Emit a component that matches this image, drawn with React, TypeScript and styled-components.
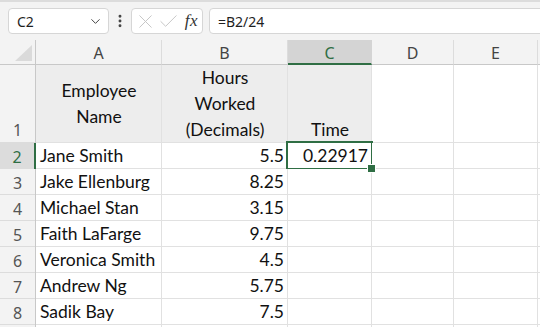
import React from "react";
import styled, { createGlobalStyle, css } from "styled-components";
import { ChevronDown, EllipsisVertical, X, Check } from "lucide-react";

const GREEN = "#2f6e44";
const GRID = "#e1e1e1";
const HEADER_LINE = "#c8c8c8";

const GlobalStyle = createGlobalStyle`
  html, body {
    margin: 0;
    padding: 0;
    width: 540px;
    height: 327px;
    overflow: hidden;
    background: #ffffff;
  }
  * {
    box-sizing: border-box;
  }
`;

const Window = styled.div`
  width: 540px;
  height: 327px;
  overflow: hidden;
  display: flex;
  flex-direction: column;
  background: #f3f3f3;
  border-top: 2px solid #dcdcdc;
`;

const FormulaBar = styled.div`
  display: flex;
  align-items: center;
  height: 38px;
  padding: 6px 0 6px 8px;
  font-family: "Noto Sans", "Open Sans", sans-serif;
  font-size: 14px;
  color: #1f1f1f;
`;

const NameBox = styled.div`
  flex: none;
  width: 101px;
  height: 26px;
  display: flex;
  align-items: center;
  justify-content: space-between;
  padding: 0 5px 0 8px;
  background: #ffffff;
  border: 1px solid #d6d6d6;
  border-radius: 4px;
`;

const Dots = styled.div`
  flex: none;
  width: 22px;
  display: flex;
  justify-content: center;
  color: #444;
`;

const IconGroup = styled.div`
  flex: none;
  width: 72px;
  height: 26px;
  display: flex;
  align-items: center;
  gap: 0;
  padding: 0 4px 0 2px;
  background: #ffffff;
  border: 1px solid #d6d6d6;
  border-radius: 4px;
  color: #c4c4c4;
`;

const Fx = styled.span`
  margin-left: auto;
  font-family: "Liberation Serif", serif;
  font-style: italic;
  font-size: 17px;
  color: #333;
  letter-spacing: 0.5px;
`;

const FormulaInput = styled.div`
  flex: 1;
  height: 26px;
  margin-left: 6px;
  margin-right: -10px;
  display: flex;
  align-items: center;
  padding-left: 8px;
  background: #ffffff;
  border: 1px solid #d6d6d6;
  border-radius: 4px;
`;

const Sheet = styled.div`
  display: grid;
  grid-template-columns: 36px 126px 126px 84px 82px 84px 1fr;
  grid-template-rows: 25px 78px repeat(8, 26px);
  background: #ffffff;
`;

const headerFont = css`
  font-family: "Noto Sans", "Open Sans", sans-serif;
  font-size: 16px;
  color: #444;
`;

const Corner = styled.div`
  position: relative;
  background: #f3f3f3;
  border-right: 1px solid ${HEADER_LINE};
  border-bottom: 1px solid ${HEADER_LINE};
  &::after {
    content: "";
    position: absolute;
    right: 3px;
    bottom: 3px;
    width: 0;
    height: 0;
    border-left: 17px solid transparent;
    border-bottom: 16px solid #dadada;
  }
`;

const ColHeader = styled.div<{ $selected?: boolean }>`
  ${headerFont};
  display: flex;
  align-items: center;
  justify-content: center;
  background: ${({ $selected }) => ($selected ? "#d4d4d4" : "#f3f3f3")};
  color: ${({ $selected }) => ($selected ? GREEN : "#444")};
  border-right: 1px solid ${({ $selected }) => ($selected ? "#d4d4d4" : "#dcdcdc")};
  border-bottom: ${({ $selected }) =>
    $selected ? `2px solid ${GREEN}` : `1px solid ${HEADER_LINE}`};
  padding-top: ${({ $selected }) => ($selected ? "2px" : "1px")};
`;

const RowHeader = styled.div<{ $selected?: boolean; $bottom?: boolean }>`
  ${headerFont};
  display: flex;
  justify-content: center;
  align-items: ${({ $bottom }) => ($bottom ? "flex-end" : "center")};
  padding-top: ${({ $bottom }) => ($bottom ? "0" : "2px")};
  background: ${({ $selected }) => ($selected ? "#dcdcdc" : "#f3f3f3")};
  color: ${({ $selected }) => ($selected ? GREEN : "#555")};
  border-right: ${({ $selected }) =>
    $selected ? `2px solid ${GREEN}` : `1px solid ${HEADER_LINE}`};
  box-shadow: inset 0 -1px 0 #dcdcdc;
  line-height: 26px;
`;

type HAlign = "left" | "center" | "right";
type VAlign = "top" | "middle" | "bottom";

const Cell = styled.div<{
  $align?: HAlign;
  $valign?: VAlign;
  $fill?: boolean;
  $active?: boolean;
}>`
  position: relative;
  display: flex;
  flex-direction: column;
  align-items: ${({ $align }) =>
    $align === "right" ? "flex-end" : $align === "center" ? "center" : "flex-start"};
  justify-content: ${({ $valign }) =>
    $valign === "middle" ? "center" : $valign === "top" ? "flex-start" : "flex-end"};
  text-align: ${({ $align }) => $align || "left"};
  padding: 0 4px;
  font-family: "Lato", "Liberation Sans", sans-serif;
  font-size: 17.5px;
  line-height: 26px;
  color: #111;
  white-space: nowrap;
  background: ${({ $fill }) => ($fill ? "#ededed" : "#ffffff")};
  box-shadow: inset -1px -1px 0 ${GRID};
  ${({ $active }) =>
    $active &&
    css`
      &::after {
        content: "";
        position: absolute;
        left: -2px;
        top: -2px;
        right: -1px;
        bottom: -1px;
        border: 2px solid ${GREEN};
        pointer-events: none;
      }
      &::before {
        content: "";
        position: absolute;
        right: -4px;
        bottom: -4px;
        width: 7px;
        height: 7px;
        background: ${GREEN};
        border: 1px solid #ffffff;
        z-index: 2;
      }
    `}
`;

const Line = styled.span`
  display: block;
`;

const columns = ["A", "B", "C", "D", "E", ""];

const employees: { row: string; name: string; hours: string; time?: string }[] = [
  { row: "2", name: "Jane Smith", hours: "5.5", time: "0.22917" },
  { row: "3", name: "Jake Ellenburg", hours: "8.25" },
  { row: "4", name: "Michael Stan", hours: "3.15" },
  { row: "5", name: "Faith LaFarge", hours: "9.75" },
  { row: "6", name: "Veronica Smith", hours: "4.5" },
  { row: "7", name: "Andrew Ng", hours: "5.75" },
  { row: "8", name: "Sadik Bay", hours: "7.5" },
  { row: "", name: "", hours: "" },
];

export default function App() {
  return (
    <>
      <GlobalStyle />
      <Window>
        <FormulaBar>
          <NameBox>
            <span>C2</span>
            <ChevronDown size={15} strokeWidth={1.6} color="#444" />
          </NameBox>
          <Dots>
            <EllipsisVertical size={16} strokeWidth={2.4} />
          </Dots>
          <IconGroup>
            <X size={23} strokeWidth={1} />
            <Check size={23} strokeWidth={1} />
            <Fx>fx</Fx>
          </IconGroup>
          <FormulaInput>=B2/24</FormulaInput>
        </FormulaBar>

        <Sheet>
          <Corner />
          {columns.map((c) => (
            <ColHeader key={c || "F"} $selected={c === "C"}>
              {c}
            </ColHeader>
          ))}

          <RowHeader $bottom>1</RowHeader>
          <Cell $fill $align="center" $valign="middle">
            <Line>Employee</Line>
            <Line>Name</Line>
          </Cell>
          <Cell $fill $align="center">
            <Line>Hours</Line>
            <Line>Worked</Line>
            <Line>(Decimals)</Line>
          </Cell>
          <Cell $fill $align="center">
            Time
          </Cell>
          <Cell />
          <Cell />
          <Cell />

          {employees.map((e, i) => (
            <React.Fragment key={i}>
              <RowHeader $selected={i === 0}>{e.row}</RowHeader>
              <Cell>{e.name}</Cell>
              <Cell $align="right">{e.hours}</Cell>
              <Cell $align="right" $active={i === 0}>
                {e.time}
              </Cell>
              <Cell />
              <Cell />
              <Cell />
            </React.Fragment>
          ))}
        </Sheet>
      </Window>
    </>
  );
}
